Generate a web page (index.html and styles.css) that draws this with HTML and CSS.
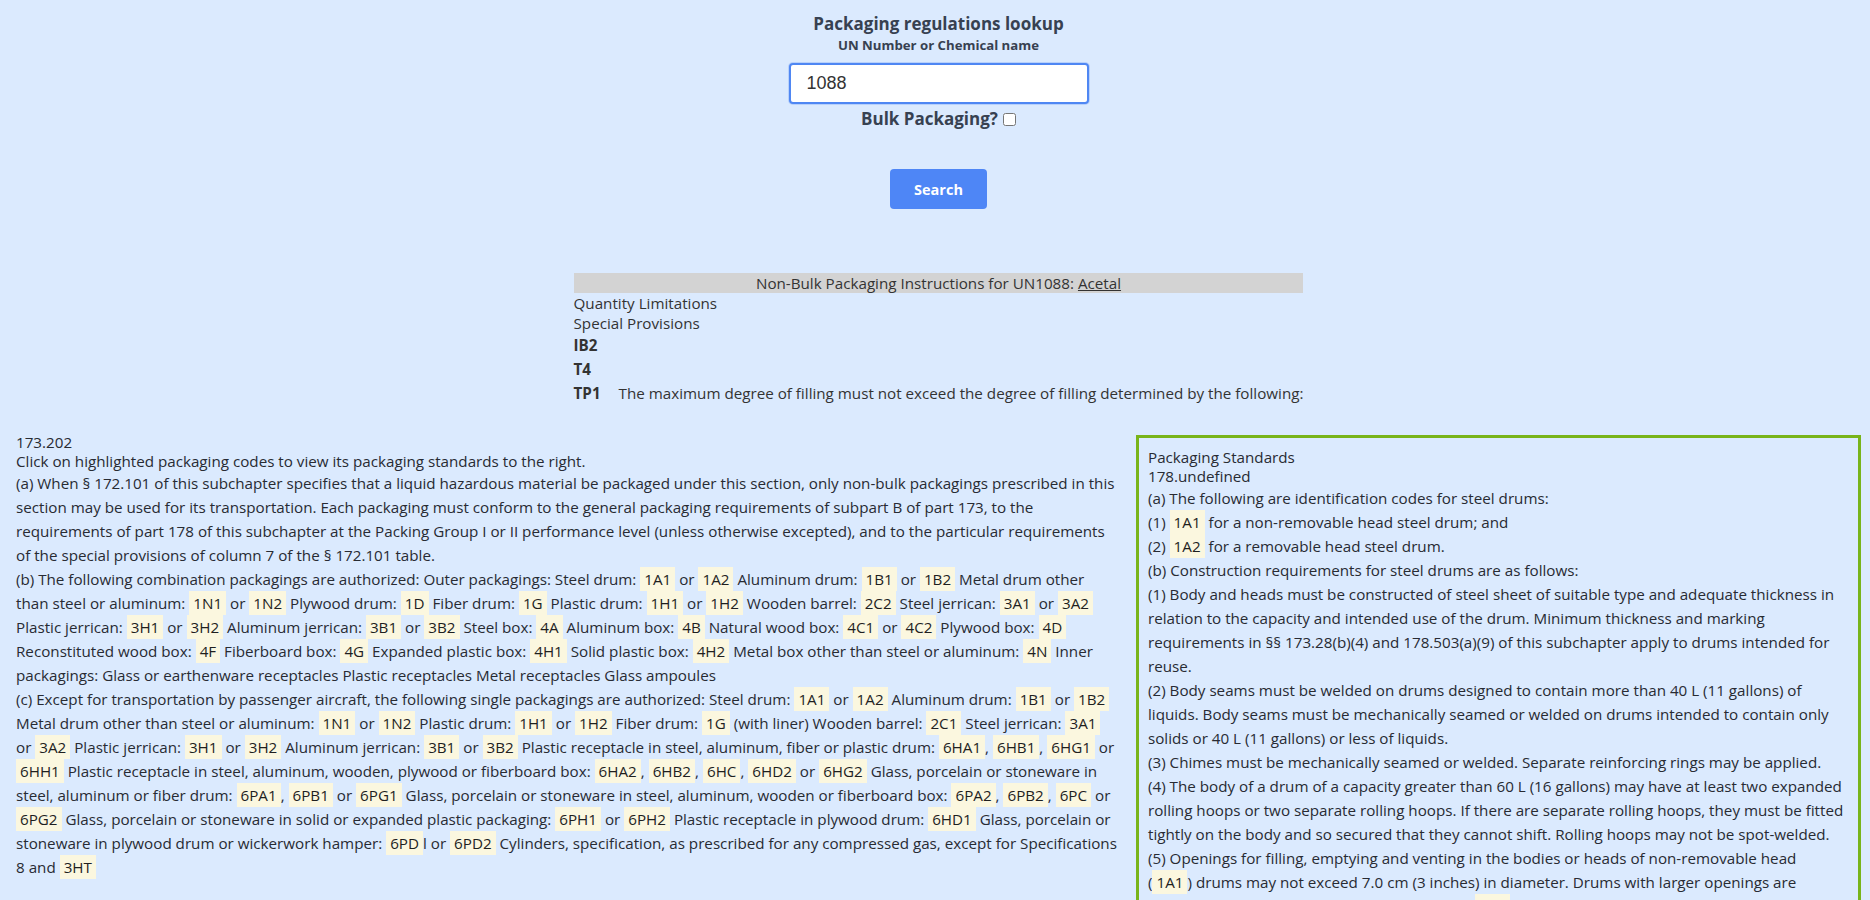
FILE: index.html
```html
<!DOCTYPE html>
<html lang="en">
<head>
<meta charset="utf-8">
<title>Packaging regulations lookup</title>
<link rel="stylesheet" href="styles.css">
</head>
<body>
<div class="page">
  <header class="search">
    <h1 class="title">Packaging regulations lookup</h1>
    <label class="subtitle" for="q">UN Number or Chemical name</label>
    <input class="query" id="q" type="text" value="1088">
    <label class="bulk">Bulk Packaging?<input class="bulk-check" type="checkbox"></label>
    <button class="search-btn" type="button">Search</button>
  </header>

  <section class="instr">
    <div class="instr-bar">Non-Bulk Packaging Instructions for UN1088: <a class="instr-link" href="#">Acetal</a></div>
    <div class="instr-line">Quantity Limitations</div>
    <div class="instr-line">Special Provisions</div>
    <table class="provisions">
      <tr><th class="prov-code">IB2</th><td class="prov-text"></td></tr>
      <tr><th class="prov-code">T4</th><td class="prov-text"></td></tr>
      <tr><th class="prov-code">TP1</th><td class="prov-text">The maximum degree of filling must not exceed the degree of filling determined by the following:</td></tr>
    </table>
  </section>

  <div class="main">
    <div class="regs">
      <div class="regs-num">173.202</div>
      <div class="regs-hint">Click on highlighted packaging codes to view its packaging standards to the right.</div>
      <p class="para">(a) When § 172.101 of this subchapter specifies that a liquid hazardous material be packaged under this section, only non-bulk packagings prescribed in this section may be used for its transportation. Each packaging must conform to the general packaging requirements of subpart B of part 173, to the requirements of part 178 of this subchapter at the Packing Group I or II performance level (unless otherwise excepted), and to the particular requirements of the special provisions of column 7 of the § 172.101 table.</p>
      <p class="para">(b) The following combination packagings are authorized: Outer packagings: Steel drum: <span class="code">1A1</span> or <span class="code">1A2</span> Aluminum drum: <span class="code">1B1</span> or <span class="code">1B2</span> Metal drum other than steel or aluminum: <span class="code">1N1</span> or <span class="code">1N2</span> Plywood drum: <span class="code">1D</span> Fiber drum: <span class="code">1G</span> Plastic drum: <span class="code">1H1</span> or <span class="code">1H2</span> Wooden barrel: <span class="code">2C2</span> Steel jerrican: <span class="code">3A1</span> or <span class="code">3A2</span> Plastic jerrican: <span class="code">3H1</span> or <span class="code">3H2</span> Aluminum jerrican: <span class="code">3B1</span> or <span class="code">3B2</span> Steel box: <span class="code">4A</span> Aluminum box: <span class="code">4B</span> Natural wood box: <span class="code">4C1</span> or <span class="code">4C2</span> Plywood box: <span class="code">4D</span> Reconstituted wood box: <span class="code">4F</span> Fiberboard box: <span class="code">4G</span> Expanded plastic box: <span class="code">4H1</span> Solid plastic box: <span class="code">4H2</span> Metal box other than steel or aluminum: <span class="code">4N</span> Inner packagings: Glass or earthenware receptacles Plastic receptacles Metal receptacles Glass ampoules</p>
      <p class="para">(c) Except for transportation by passenger aircraft, the following single packagings are authorized: Steel drum: <span class="code">1A1</span> or <span class="code">1A2</span> Aluminum drum: <span class="code">1B1</span> or <span class="code">1B2</span> Metal drum other than steel or aluminum: <span class="code">1N1</span> or <span class="code">1N2</span> Plastic drum: <span class="code">1H1</span> or <span class="code">1H2</span> Fiber drum: <span class="code">1G</span> (with liner) Wooden barrel: <span class="code">2C1</span> Steel jerrican: <span class="code">3A1</span> or <span class="code">3A2</span> Plastic jerrican: <span class="code">3H1</span> or <span class="code">3H2</span> Aluminum jerrican: <span class="code">3B1</span> or <span class="code">3B2</span> Plastic receptacle in steel, aluminum, fiber or plastic drum: <span class="code">6HA1</span>, <span class="code">6HB1</span>, <span class="code">6HG1</span> or <span class="code">6HH1</span> Plastic receptacle in steel, aluminum, wooden, plywood or fiberboard box: <span class="code">6HA2</span>, <span class="code">6HB2</span>, <span class="code">6HC</span>, <span class="code">6HD2</span> or <span class="code">6HG2</span> Glass, porcelain or stoneware in steel, aluminum or fiber drum: <span class="code">6PA1</span>, <span class="code">6PB1</span> or <span class="code">6PG1</span> Glass, porcelain or stoneware in steel, aluminum, wooden or fiberboard box: <span class="code">6PA2</span>, <span class="code">6PB2</span>, <span class="code">6PC</span> or <span class="code">6PG2</span> Glass, porcelain or stoneware in solid or expanded plastic packaging: <span class="code">6PH1</span> or <span class="code">6PH2</span> Plastic receptacle in plywood drum: <span class="code">6HD1</span> Glass, porcelain or stoneware in plywood drum or wickerwork hamper: <span class="code">6PD</span>l or <span class="code">6PD2</span> Cylinders, specification, as prescribed for any compressed gas, except for Specifications 8 and <span class="code">3HT</span></p>
    </div>

    <aside class="standards">
      <div class="std-title">Packaging Standards</div>
      <div class="std-num">178.undefined</div>
      <p class="para">(a) The following are identification codes for steel drums:</p>
      <p class="para">(1) <span class="code">1A1</span> for a non-removable head steel drum; and</p>
      <p class="para">(2) <span class="code">1A2</span> for a removable head steel drum.</p>
      <p class="para">(b) Construction requirements for steel drums are as follows:</p>
      <p class="para">(1) Body and heads must be constructed of steel sheet of suitable type and adequate thickness in relation to the capacity and intended use of the drum. Minimum thickness and marking requirements in §§ 173.28(b)(4) and 178.503(a)(9) of this subchapter apply to drums intended for reuse.</p>
      <p class="para">(2) Body seams must be welded on drums designed to contain more than 40 L (11 gallons) of liquids. Body seams must be mechanically seamed or welded on drums intended to contain only solids or 40 L (11 gallons) or less of liquids.</p>
      <p class="para">(3) Chimes must be mechanically seamed or welded. Separate reinforcing rings may be applied.</p>
      <p class="para">(4) The body of a drum of a capacity greater than 60 L (16 gallons) may have at least two expanded rolling hoops or two separate rolling hoops. If there are separate rolling hoops, they must be fitted tightly on the body and so secured that they cannot shift. Rolling hoops may not be spot-welded.</p>
      <p class="para">(5) Openings for filling, emptying and venting in the bodies or heads of non-removable head<br>(<span class="code">1A1</span>) drums may not exceed 7.0 cm (3 inches) in diameter. Drums with larger openings are considered to be of the removable head type (<span class="code">1A2</span>). Closures for openings in the bodies or heads of drums must be so designed and applied that they will remain secure and leakproof under normal conditions of transport. Closure flanges may be mechanically seamed or welded in place. Gaskets or other sealing elements must be used with closures, unless the closure is inherently leakproof.</p>
      <p class="para">(6) Closure devices for removable head drums must be so designed and applied that they will remain secure and drums will remain leakproof under normal conditions of transport. Gaskets or other sealing elements must be used with all removable heads.</p>
    </aside>
  </div>
</div>
</body>
</html>
```

FILE: styles.css
```css
html, body {
  margin: 0;
  padding: 0;
}

body {
  background: #dbeafe;
  font-family: "Open Sans", "Noto Sans", sans-serif;
  color: #282b33;
}

.page {
  padding: 0 9px 24px 16px;
}

/* ---------- search header ---------- */
.search {
  display: flex;
  flex-direction: column;
  align-items: center;
  padding-top: 12px;
}

.title {
  margin: 0;
  font-size: 17px;
  font-weight: 700;
  line-height: 24px;
  color: #374151;
}

.subtitle {
  font-size: 13.2px;
  font-weight: 700;
  line-height: 18px;
  color: #374151;
}

.query {
  margin-top: 9px;
  width: 300px;
  height: 41px;
  box-sizing: border-box;
  padding: 0 16px;
  border: 2px solid #4f87f3;
  border-radius: 4px;
  background: #fff;
  font-family: "Liberation Sans", Arial, sans-serif;
  font-size: 18px;
  color: #333;
  outline: none;
  box-shadow: 0 0 0 1px rgba(79, 135, 243, 0.25);
}

.bulk {
  margin-top: 3px;
  display: flex;
  align-items: center;
  font-size: 17px;
  font-weight: 700;
  line-height: 24px;
  color: #374151;
}

.bulk-check {
  width: 13px;
  height: 13px;
  margin: 0 0 0 5px;
}

.search-btn {
  margin-top: 38px;
  width: 97px;
  height: 40px;
  border: none;
  border-radius: 4px;
  background: #4e86f6;
  color: #fff;
  font-family: "Open Sans", sans-serif;
  font-size: 14.5px;
  font-weight: 700;
}

/* ---------- instructions ---------- */
.instr {
  width: fit-content;
  margin: 64px auto 0;
  font-size: 15.2px;
  line-height: 20px;
  color: #333;
}

.instr-bar {
  background: #d3d3d3;
  text-align: center;
}

.instr-link {
  color: inherit;
  text-decoration: underline;
}

.provisions {
  border-collapse: separate;
  border-spacing: 0;
  font-size: 15.2px;
  line-height: 20px;
}

.prov-code {
  padding: 2px 0;
  text-align: left;
  font-weight: 700;
  vertical-align: top;
}

.prov-text {
  padding: 2px 0 2px 18px;
}

/* ---------- main two columns ---------- */
.main {
  display: flex;
  align-items: flex-start;
  gap: 18px;
  margin-top: 28px;
}

.regs {
  flex: 1 1 auto;
  min-width: 0;
  font-size: 15.2px;
}

.regs-num,
.regs-hint {
  line-height: 19px;
}

.para {
  margin: 0;
  line-height: 24px;
}

.code {
  display: inline-block;
  padding: 2px 4px;
  line-height: 20px;
  background: #fbf7df;
  color: #1f1f1f;
}

.standards {
  flex: 0 0 725px;
  box-sizing: border-box;
  margin-top: 2px;
  padding: 10px 9px 12px;
  border: 3px solid #78b41a;
  font-size: 15.2px;
}

.std-title,
.std-num {
  line-height: 19px;
}
```
